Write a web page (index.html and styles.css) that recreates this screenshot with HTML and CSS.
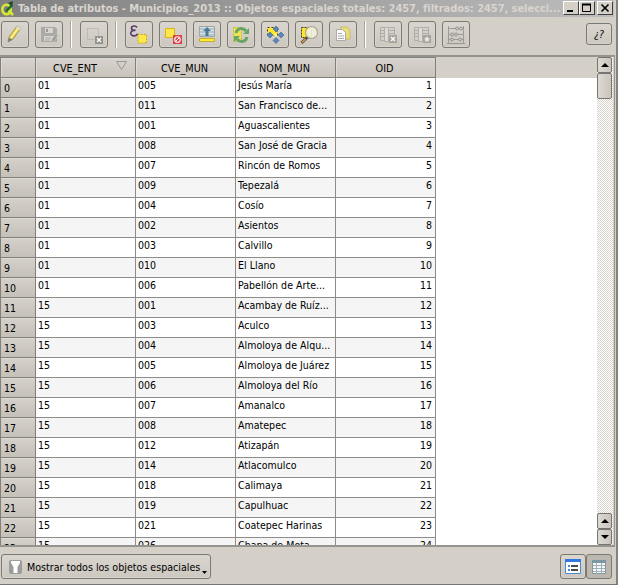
FILE: index.html
```html
<!DOCTYPE html>
<html lang="es">
<head>
<meta charset="utf-8">
<title>Tabla de atributos</title>
<link rel="stylesheet" href="styles.css">
</head>
<body>
<div class="window">
  <header class="titlebar">
    <svg class="logo" width="16" height="16" viewBox="0 0 16 16"><ellipse cx="6.500" cy="8.500" rx="4.200" ry="4.800" fill="none" stroke="#d8e830" stroke-width="2.600"/><path d="M8 9l5 5" stroke="#d8e830" stroke-width="2.600"/><path d="M5 10L12 2l1 3-6 6z" fill="#176b2b"/><path d="M8 2l5-2-1 5z" fill="#174e25"/></svg>
    <div class="caption">Tabla de atributos - Municipios_2013 :: Objetos espaciales totales: 2457, filtrados: 2457, selecci...</div>
    <div class="winbtns"><i><svg width="14" height="12"><path d="M3 9h6" stroke="#000" stroke-width="2"/></svg></i><i><svg width="14" height="12"><path d="M2.500 2.500h8v7h-8z" fill="none" stroke="#000"/><path d="M2 2.500h9" stroke="#000" stroke-width="2"/></svg></i><i class="close"><svg width="14" height="12"><path d="M3.500 2.500l7 7m0-7l-7 7" stroke="#000" stroke-width="1.600"/></svg></i></div>
  </header>
  <div class="toolbar">
    <button class="tool"><svg viewBox="0 0 20 20"><path d="M3 17l1-5L12 1l4 2-8 11z" fill="#e5d044" stroke="#8f8c5a" stroke-width=".8"/><path d="M6 13L14 2" stroke="#fff59b" stroke-width="1.400"/><path d="M3 17l1-4 3.500 1.700z" fill="#777b77"/><path d="M12 1l4 2-1 2-4-2z" fill="#ddd"/></svg></button>
    <button class="tool"><svg viewBox="0 0 20 20"><path d="M2 2h14l2 2v13H2z" fill="#aaa9a5"/><path d="M6 3h8v5H6zM5 11h10v5H5z" fill="#d8d5cf"/><path d="M7 4h2v3H7z" fill="#999"/><path d="M6 13h6M6 15h5" stroke="#aaa"/><path d="M12 18l1-4 4-5 2 1-4 6z" fill="#999" stroke="#ccc" stroke-width=".6"/></svg></button>
    <span class="sep"></span>
    <button class="tool"><svg viewBox="0 0 20 20"><path d="M3.500 3.500h11v11h-11z" fill="none" stroke="#b3b0aa" stroke-dasharray="2 1"/><path d="M11 11h8v8h-8z" fill="#92928f"/><path d="M13 13l4 4m0-4l-4 4" stroke="#fff" stroke-width="1.400"/></svg></button>
    <span class="sep"></span>
    <button class="tool"><svg viewBox="0 0 20 20"><path d="M8 2.500C6.500 0 2 .8 2.500 3.500c.3 1.700 2 2 4 1.800C3.500 5.300 1.500 6.500 1.800 8.500 2.300 11.800 7.500 11.500 8.500 8.800" fill="none" stroke="#563c6c" stroke-width="1.600"/><path d="M9 9.500h8.500v8.500H9z" fill="#ffe949" stroke="#d0ac16" stroke-dasharray="2 1"/></svg></button>
    <button class="tool"><svg viewBox="0 0 20 20"><path d="M2.500 3.500h9v9h-9z" fill="#ffe747" stroke="#d9b420"/><path d="M10 10h9v9h-9z" fill="#dc4149"/><circle cx="14.500" cy="14.500" r="2.800" fill="none" stroke="#fff" stroke-width="1.100"/><path d="M12.500 16.500l4-4" stroke="#fff"/></svg></button>
    <button class="tool"><svg viewBox="0 0 20 20"><path d="M2.500 1.500h15v10h-15z" fill="#d9e3e5" stroke="#9aa6a8"/><path d="M3 4h14M3 7h14M3 10h14" stroke="#8fa7b4"/><path d="M10 2L6 6h2.500v5h3V6H14z" fill="#4f7896"/><path d="M2.500 13.500h15v3h-15z" fill="#ffec36" stroke="#c3ad32"/></svg></button>
    <button class="tool"><svg viewBox="0 0 20 20"><path d="M2.500 2.500h8v14h-8z" fill="#eee351" stroke="#c5ba49" stroke-dasharray="2 1"/><g fill="none" stroke="#67a567" stroke-width="3"><path d="M5 8c1-5 7-6 10-2"/><path d="M16 12c-1 5-7 6-10 2"/></g><path d="M18 3v6h-6zM3 17v-6h6z" fill="#67a567"/></svg></button>
    <button class="tool"><svg viewBox="0 0 20 20"><path d="M2.500 2.500h10v8h-10z" fill="#ffe52c" stroke="#413d20" stroke-dasharray="2 2"/><path d="M11 1l3 3-3 3-3-3zM5 7l3 3-3 3-3-3zM16 7l3 3-3 3-3-3zM11 12.500l3 3-3 3-3-3z" fill="#5c85b5" stroke="#49709c" stroke-width=".7"/><path d="M10.500 8l2 2-2 2-2-2z" fill="#fff38b"/></svg></button>
    <button class="tool"><svg viewBox="0 0 20 20"><path d="M2.500 2.500h10v10h-10z" fill="#ffe52c" stroke="#413d20" stroke-dasharray="2 1"/><path d="M8.500 12l-6 6" stroke="#4d4d4d" stroke-width="3"/><path d="M6.500 14l-3.500 3.500" stroke="#e89b3f" stroke-width="1.600"/><circle cx="12.500" cy="7.500" r="6" fill="#f0efdf" fill-opacity=".9" stroke="#aaa78f" stroke-width="1.200"/></svg></button>
    <button class="tool"><svg viewBox="0 0 20 20"><path d="M8 2h6l3 3v9H8z" fill="#e9dd76" stroke="#c9bc69"/><path d="M3.500 4.500h6l3 3v8h-9z" fill="#fafafa" stroke="#aaa"/><path d="M5 8.500h4m-4 2.500h6M5 13.500h6" stroke="#aaa"/></svg></button>
    <span class="sep"></span>
    <button class="tool dim"><svg viewBox="0 0 20 20"><path d="M2.500 2.500h14v13h-14zM3 5.500h13M3 8.500h13M3 11.500h13M6.500 3v12M10.500 3v12" fill="#d4d1cb" stroke="#aaa7a2"/><path d="M6.500 2.500h4v14h-4z" fill="#dfddd7" stroke="#aaa"/><path d="M11 10h8v8h-8z" fill="#a09e99"/><path d="M13 12l4 4m0-4l-4 4" stroke="#fff" stroke-width="1.500"/></svg></button>
    <button class="tool dim"><svg viewBox="0 0 20 20"><path d="M2.500 2.500h14v13h-14zM3 5.500h13M3 8.500h13M3 11.500h13M6.500 3v12M10.500 3v12" fill="#d4d1cb" stroke="#aaa7a2"/><path d="M6.500 2.500h4v14h-4z" fill="#dfddd7" stroke="#aaa"/><path d="M11 10h8v8h-8z" fill="#a09e99"/><path d="M15 11l1 2 2 .5-1.500 1.500.5 2-2-1-2 1 .5-2L12 13.500l2-.5z" fill="#eee"/></svg></button>
    <button class="tool dim"><svg viewBox="0 0 20 20"><path d="M2.500 1v18m15-18v18M2 3.500h16M2 9.500h16M2 14.500h16M1 18.500h18" fill="none" stroke="#93918c"/><g fill="#c9c6c0" stroke="#8e8c87"><circle cx="11" cy="3.500" r="1.500"/><circle cx="15" cy="3.500" r="1.500"/><circle cx="6" cy="9.500" r="1.500"/><circle cx="10" cy="9.500" r="1.500"/><circle cx="6" cy="14.500" r="1.500"/><circle cx="14" cy="14.500" r="1.500"/></g></svg></button>
    <button class="help">¿?</button>
  </div>
  <main class="frame">
    <div class="table">
      <div class="row head"><b></b><span>CVE_ENT<svg class="sort" width="11" height="9"><path d="M.5 .5h10L5.500 8.500z" fill="#d3cfc8" stroke="#9b9994"/></svg></span><span>CVE_MUN</span><span>NOM_MUN</span><span>OID</span></div>
      <div class="row"><b>0</b><span>01</span><span>005</span><span>Jesús María</span><span>1</span></div>
      <div class="row"><b>1</b><span>01</span><span>011</span><span>San Francisco de...</span><span>2</span></div>
      <div class="row"><b>2</b><span>01</span><span>001</span><span>Aguascalientes</span><span>3</span></div>
      <div class="row"><b>3</b><span>01</span><span>008</span><span>San José de Gracia</span><span>4</span></div>
      <div class="row"><b>4</b><span>01</span><span>007</span><span>Rincón de Romos</span><span>5</span></div>
      <div class="row"><b>5</b><span>01</span><span>009</span><span>Tepezalá</span><span>6</span></div>
      <div class="row"><b>6</b><span>01</span><span>004</span><span>Cosío</span><span>7</span></div>
      <div class="row"><b>7</b><span>01</span><span>002</span><span>Asientos</span><span>8</span></div>
      <div class="row"><b>8</b><span>01</span><span>003</span><span>Calvillo</span><span>9</span></div>
      <div class="row"><b>9</b><span>01</span><span>010</span><span>El Llano</span><span>10</span></div>
      <div class="row"><b>10</b><span>01</span><span>006</span><span>Pabellón de Arte...</span><span>11</span></div>
      <div class="row"><b>11</b><span>15</span><span>001</span><span>Acambay de Ruíz...</span><span>12</span></div>
      <div class="row"><b>12</b><span>15</span><span>003</span><span>Aculco</span><span>13</span></div>
      <div class="row"><b>13</b><span>15</span><span>004</span><span>Almoloya de Alqu...</span><span>14</span></div>
      <div class="row"><b>14</b><span>15</span><span>005</span><span>Almoloya de Juárez</span><span>15</span></div>
      <div class="row"><b>15</b><span>15</span><span>006</span><span>Almoloya del Río</span><span>16</span></div>
      <div class="row"><b>16</b><span>15</span><span>007</span><span>Amanalco</span><span>17</span></div>
      <div class="row"><b>17</b><span>15</span><span>008</span><span>Amatepec</span><span>18</span></div>
      <div class="row"><b>18</b><span>15</span><span>012</span><span>Atizapán</span><span>19</span></div>
      <div class="row"><b>19</b><span>15</span><span>014</span><span>Atlacomulco</span><span>20</span></div>
      <div class="row"><b>20</b><span>15</span><span>018</span><span>Calimaya</span><span>21</span></div>
      <div class="row"><b>21</b><span>15</span><span>019</span><span>Capulhuac</span><span>22</span></div>
      <div class="row"><b>22</b><span>15</span><span>021</span><span>Coatepec Harinas</span><span>23</span></div>
      <div class="row"><b>23</b><span>15</span><span>026</span><span>Chapa de Mota</span><span>24</span></div>
    </div>
    <div class="scroll">
      <i class="arrow"><svg width="8" height="4"><path d="M0 4l4-4 4 4z"/></svg></i>
      <i class="thumb"></i>
      <i class="arrow last"><svg width="8" height="4"><path d="M0 4l4-4 4 4z"/></svg></i>
      <i class="arrow"><svg width="8" height="4"><path d="M0 0l4 4 4-4z"/></svg></i>
    </div>
  </main>
  <footer class="footer">
    <button class="filter"><svg width="13" height="14"><rect width="13" height="14" rx="2" fill="#9b9d9c"/><path d="M2 1h9v2L8.500 7v6h-4V7L2 3z" fill="#fff"/></svg><span>Mostrar todos los objetos espaciales</span><svg class="drop" width="5" height="3"><path d="M0 0h5L2.500 3z"/></svg></button>
    <div class="views">
      <button class="view"><svg width="16" height="15"><path d="M.5 .5h15v14H.5z" fill="#fff" stroke="#4a8bd2"/><path d="M0 0h16v3H0z" fill="#2e78df"/><path d="M3 6h2v2H3zM3 10h2v2H3z" fill="#3b8be8"/><path d="M6 7h7M6 11h7" stroke="#111" stroke-width="1.500"/></svg></button>
      <button class="view on"><svg width="14" height="14"><path d="M.5 .5h13v13H.5z" fill="#f5f7f7" stroke="#849499"/><path d="M0 0h14v3H0z" fill="#7b97a3"/><path d="M1 5.500h12M1 8.500h12M1 11.500h12M4.500 3v11M9.500 3v11" stroke="#9fb1b8"/></svg></button>
    </div>
  </footer>
</div>
</body>
</html>
```
FILE: styles.css
```css
* { box-sizing: border-box; }
body { margin: 0; overflow: hidden; font-family: "DejaVu Sans Condensed", "DejaVu Sans", sans-serif; font-stretch: condensed; font-size: 10.5px; color: #000; }
button { font: inherit; padding: 0; margin: 0; color: #000; }
i { font-style: normal; }
svg { display: block; flex: none; }
.window { width: 618px; height: 585px; display: flex; flex-direction: column; background: #d4d0c8; border-right: 2px solid #85837e; border-bottom: 1px solid #777570; }

.titlebar { height: 17px; display: flex; align-items: center; background: linear-gradient(90deg, #808080, #bdbdbd); margin-right: 2px; padding-right: 1px; }
.caption { flex: 1; min-width: 0; margin-left: 2px; color: #d9d5ce; font-size: 11px; font-weight: bold; line-height: 16px; white-space: nowrap; letter-spacing: -.045px; }
.winbtns { display: flex; margin-bottom: 1px; }
.winbtns i { width: 16px; height: 14px; background: #d4d0c8; border: 1px solid; border-color: #fff #404040 #404040 #fff; }
.winbtns .close { margin-left: 2px; }

.toolbar { height: 38px; display: flex; align-items: flex-start; gap: 6px; padding: 4px 4px 0 1px; }
.tool, .help, .filter, .view { border: 1px solid #7b7973; border-radius: 3px; background: linear-gradient(#dad6cf, #ccc7bf); display: flex; align-items: center; justify-content: center; box-shadow: inset 0 0 0 1px #d8d4cc; }
.tool { width: 28px; height: 27px; flex: none; }
.tool svg { width: 20px; height: 20px; }
.dim svg { opacity: .85; }
.sep { width: 5px; height: 27px; flex: none; background: linear-gradient(90deg, transparent 1px, #aaa69f 1px, #aaa69f 2px, #fff 2px, #fff 3px, transparent 3px); }
.help { width: 26px; height: 22px; margin: 2px 0 0 auto; font-style: italic; }

.frame { height: 492px; display: flex; border: solid #96948e; border-width: 2px 1px 2px 0; margin-right: 1px; overflow: hidden; }
.table { flex: 1; overflow: hidden; background: linear-gradient(#d4d0c8 21px, #fff 21px); }
.row { display: grid; grid-template-columns: 36px repeat(4, 100px); height: 20px; width: 436px; line-height: 15px; }
.row b { font-weight: normal; padding: 3px 0 0 3px; background: linear-gradient(#d5d1ca, #c5c0b8); border: 1px solid #817f79; border-width: 0 1px 1px; box-shadow: inset 0 1px #e0dcd5, 0 1px #817f79; position: relative; }
.row span { padding: 0 3px 0 2px; border-right: 1px solid #8d8c89; border-bottom: 1px solid #8d8c89; background: #fff; white-space: nowrap; overflow: hidden; }
.row span:nth-child(4) { letter-spacing: .03px; }
.row:nth-child(odd) span { background: #f5f5f5; }
.row span:last-child { text-align: right; }
.row.head { height: 21px; font-size: 10.8px; }
.row.head b, .row.head span { background: linear-gradient(#d8d4cd, #c8c3bb); border: 1px solid #817f79; border-left-width: 0; box-shadow: inset 1px 1px #dfdbd4; }
.row.head b { border-left-width: 1px; }
.row.head span { display: flex; align-items: center; justify-content: center; padding: 1px 2px 0 0; text-align: center; }
.row.head span:nth-child(2) { padding-left: 5px; }
.sort { margin: -5px -6px 0 19px; }

.scroll { width: 17px; padding-right: 1px; display: flex; flex-direction: column; background: repeating-conic-gradient(#fff 0 25%, #d8d4cd 0 50%) 0 0 / 2px 2px; border-right: 1px solid #d4d0c8; }
.scroll i { flex: none; background: linear-gradient(90deg, #dedad3, #c9c5bd); border: 1px solid #777570; border-radius: 2px; }
.arrow { height: 16px; display: flex; align-items: center; justify-content: center; }
.thumb { height: 26px; }
.last { margin-top: auto; }

.footer { flex: 1; display: flex; justify-content: space-between; align-items: flex-start; padding: 7px 4px 0 1px; }
.filter { width: 210px; height: 25px; justify-content: flex-start; padding-left: 7px; }
.filter span { margin-left: 5px; white-space: nowrap; font-size: 10.6px; letter-spacing: 0; }
.drop { margin: 12px 0 0 2px; }
.views { display: flex; }
.view { width: 26px; height: 25px; }
.view.on { background: #bcb8b0; box-shadow: none; }
```
